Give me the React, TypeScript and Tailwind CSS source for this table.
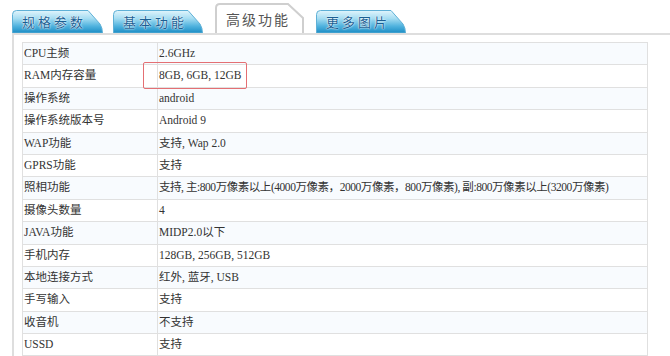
import React from "react";

const rows: [string, string][] = [
  ["CPU主频", "2.6GHz"],
  ["RAM内存容量", "8GB, 6GB, 12GB"],
  ["操作系统", "android"],
  ["操作系统版本号", "Android 9"],
  ["WAP功能", "支持, Wap 2.0"],
  ["GPRS功能", "支持"],
  ["照相功能", "支持, 主:800万像素以上(4000万像素，2000万像素，800万像素), 副:800万像素以上(3200万像素)"],
  ["摄像头数量", "4"],
  ["JAVA功能", "MIDP2.0以下"],
  ["手机内存", "128GB, 256GB, 512GB"],
  ["本地连接方式", "红外, 蓝牙, USB"],
  ["手写输入", "支持"],
  ["收音机", "不支持"],
  ["USSD", "支持"],
];

function BlueTab({ label, w, id }: { label: string; w: number; id: string }) {
  return (
    <div className="relative h-[23px] flex items-center" style={{ width: w }}>
      <svg className="absolute inset-0" width={w} height={23} viewBox={`0 0 ${w} 23`}>
        <defs>
          <linearGradient id={id} x1="0" y1="0" x2="0" y2="1">
            <stop offset="0" stopColor="#e2f5fc" />
            <stop offset="0.35" stopColor="#a6ddf2" />
            <stop offset="0.7" stopColor="#4fb2de" />
            <stop offset="1" stopColor="#1c8cc4" />
          </linearGradient>
        </defs>
        <path
          d={`M0.5,23 V4.5 Q0.5,0.5 4.5,0.5 H${w - 15} L${w - 3},14 Q${w - 0.5},18 ${w - 0.5},23 Z`}
          fill={`url(#${id})`}
          stroke="#5fb0d6"
          strokeWidth="1"
        />
      </svg>
      <span
        className="relative pl-[10px] text-[13px] tracking-[3px] text-[#1b5f93] leading-none"
        style={{ textShadow: "0 0 2px #fff, 0 0 1px #fff" }}
      >
        {label}
      </span>
    </div>
  );
}

function ActiveTab({ label }: { label: string }) {
  return (
    <div className="relative h-[30px] w-[89px] flex items-center">
      <svg className="absolute inset-0" width={89} height={30} viewBox="0 0 89 30">
        <path d="M1,30 V5 Q1,1 5,1 H73 L88,15 V30" fill="#ffffff" stroke="#cfcfcf" strokeWidth="2" />
      </svg>
      <span className="relative pl-[11px] pt-[2px] text-[14px] tracking-[2px] text-[#555555] leading-none">
        {label}
      </span>
    </div>
  );
}

export default function App() {
  return (
    <div
      className="w-[670px] h-[356px] overflow-hidden bg-white"
      style={{ fontFamily: '"Liberation Serif", "Noto Sans CJK SC", serif' }}
    >
      <div className="flex items-end h-[33px] pl-[12px]" style={{ fontFamily: '"Noto Sans CJK SC", sans-serif' }}>
        <BlueTab label="规格参数" w={91} id="g1" />
        <div className="ml-[10px]">
          <BlueTab label="基本功能" w={90} id="g2" />
        </div>
        <div className="ml-[12px]">
          <ActiveTab label="高级功能" />
        </div>
        <div className="ml-[12px]">
          <BlueTab label="更多图片" w={90} id="g3" />
        </div>
      </div>
      <div className="ml-[12px] border-l-2 border-t-2 border-[#dedede] pt-[7px] pl-[8px] h-[323px]">
        <div className="relative w-[626px]">
          <table className="w-[626px] border-collapse table-fixed text-[11.5px] text-[#333333]">
            <colgroup>
              <col className="w-[135px]" />
              <col />
            </colgroup>
            <tbody>
              {rows.map(([k, v], i) => (
                <tr key={k} className={i % 2 === 0 ? "bg-[#f8fbfe]" : "bg-white"} style={{ height: 22.4 }}>
                  <td className="border border-[#e0e0e0] pl-[1px] py-0 whitespace-nowrap">{k}</td>
                  <td
                    className={
                      "border border-[#e0e0e0] pl-[1px] py-0 whitespace-nowrap" +
                      (i === 6 ? " tracking-[-0.45px]" : "")
                    }
                  >
                    {v}
                  </td>
                </tr>
              ))}
            </tbody>
          </table>
          <div className="absolute left-[121px] top-[20px] w-[104px] h-[27px] border border-[#e46f73] rounded-[2px]" />
        </div>
      </div>
    </div>
  );
}
